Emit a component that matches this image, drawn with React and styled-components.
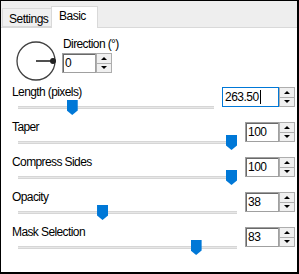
import React from "react";
import styled, { createGlobalStyle } from "styled-components";

const GlobalStyle = createGlobalStyle`
  html, body { margin: 0; padding: 0; background: #fff; }
  body { font-family: "Liberation Sans", Arial, sans-serif; font-size: 12px; color: #000; }
  * { box-sizing: border-box; }
`;

const Window = styled.div`
  width: 299px;
  height: 274px;
  border-style: solid;
  border-color: #000;
  border-width: 1px 2px 2px 1px;
  display: flex;
  flex-direction: column;
  background: #fff;
`;

const TabStrip = styled.div`
  flex: none;
  height: 27px;
  display: flex;
  align-items: flex-end;
  padding-left: 1px;
  background: #eeeeee;
  border-bottom: 1px solid #d9d9d9;
`;

const Tab = styled.div`
  height: ${(p) => (p.$active ? 22 : 19)}px;
  margin-bottom: ${(p) => (p.$active ? -1 : 0)}px;
  margin-left: ${(p) => (p.$active ? -1 : 0)}px;
  padding: ${(p) => (p.$active ? "2px 0 0 7px" : "3px 0 0 6px")};
  width: ${(p) => p.$w}px;
  background: ${(p) => (p.$active ? "#fff" : "#f0f0f0")};
  border: 1px solid #d9d9d9;
  border-bottom: ${(p) => (p.$active ? "none" : "1px solid #d9d9d9")};
  font-size: 12px;
  letter-spacing: -0.5px;
  line-height: 14px;
  position: relative;
`;

const Panel = styled.div`
  flex: 1;
  padding: 0 2px 0 10px;
  display: flex;
  flex-direction: column;
`;

const DialRow = styled.div`
  height: 58px;
  display: flex;
  align-items: flex-start;
  padding: 10px 0 0 5px;
`;

const Dial = styled.svg`
  margin-top: 3px;
  flex: none;
`;

const DirectionBox = styled.div`
  margin-left: 5px;
  display: flex;
  flex-direction: column;
  gap: 2px;
`;

const Label = styled.div`
  height: 13px;
  line-height: 13px;
  padding-left: 1px;
  letter-spacing: -0.6px;
  white-space: nowrap;
`;

const SliderRow = styled.div`
  height: 35px;
  display: grid;
  grid-template-columns: 1fr auto;
  column-gap: 8px;
`;

const SliderCell = styled.div`
  display: flex;
  flex-direction: column;
`;

const TrackArea = styled.div`
  position: relative;
  height: 22px;
  margin-left: 7px;
`;

const Track = styled.div`
  margin-top: 7px;
  height: 3px;
  background: #e7e7e7;
  border-top: 1px solid #d6d6d6;
  border-bottom: 1px solid #d6d6d6;
`;

const Thumb = styled.div`
  position: absolute;
  top: 1px;
  width: 11px;
  height: 15px;
  background: #0078d7;
  clip-path: polygon(0 0, 100% 0, 100% 70%, 50% 100%, 0 70%);
`;

const Spin = styled.div`
  display: flex;
  height: 20px;
  margin-top: ${(p) => p.$top || 0}px;
`;

const Field = styled.div`
  width: ${(p) => p.$w}px;
  height: 100%;
  padding: 2px 0 0 2px;
  line-height: 14px;
  border: 1px solid ${(p) => (p.$focus ? "#0078d7" : "#a0a0a0")};
  box-shadow: ${(p) => (p.$focus ? "none" : "inset 1px 1px 0 #696969")};
  background: #fff;
  letter-spacing: -0.5px;
  display: flex;
  align-items: flex-start;
`;

const Caret = styled.span`
  display: inline-block;
  width: 1px;
  height: 14px;
  background: #000;
  margin-left: 1px;
`;

const Buttons = styled.div`
  width: 16px;
  display: flex;
  flex-direction: column;
`;

const ArrowButton = styled.div`
  flex: 1;
  background: #f0f0f0;
  border: 1px solid #adadad;
  border-top: ${(p) => (p.$down ? "none" : "1px solid #adadad")};
  display: flex;
  align-items: center;
  justify-content: center;
  &::after {
    content: "";
    border-left: 3px solid transparent;
    border-right: 3px solid transparent;
    ${(p) => (p.$down ? "border-top: 3px solid #000;" : "border-bottom: 3px solid #000;")}
  }
`;

function UpDown({ value, width, focus, top }) {
  return (
    <Spin $top={top}>
      <Field $w={width} $focus={focus}>
        {value}
        {focus && <Caret />}
      </Field>
      <Buttons>
        <ArrowButton />
        <ArrowButton $down />
      </Buttons>
    </Spin>
  );
}

function Slider({ label, value, max, fieldWidth, focus }) {
  const ratio = value / max;
  return (
    <SliderRow>
      <SliderCell>
        <Label>{label}</Label>
        <TrackArea>
          <Track />
          <Thumb style={{ left: `calc(${ratio} * (100% - 11px))` }} />
        </TrackArea>
      </SliderCell>
      <UpDown value={value.toFixed(max > 100 ? 2 : 0)} width={fieldWidth} focus={focus} top={1} />
    </SliderRow>
  );
}

const sliders = [
  { label: "Length (pixels)", value: 263.5, max: 1000, fieldWidth: 57, focus: true },
  { label: "Taper", value: 100, max: 100, fieldWidth: 34 },
  { label: "Compress Sides", value: 100, max: 100, fieldWidth: 34 },
  { label: "Opacity", value: 38, max: 100, fieldWidth: 34 },
  { label: "Mask Selection", value: 83, max: 100, fieldWidth: 34 },
];

export default function App() {
  return (
    <>
      <GlobalStyle />
      <Window>
        <TabStrip>
          <Tab $w={50}>Settings</Tab>
          <Tab $w={47} $active>Basic</Tab>
        </TabStrip>
        <Panel>
          <DialRow>
            <Dial width="41" height="41" viewBox="0 0 41 41">
              <circle cx="20" cy="20" r="19" fill="none" stroke="#404040" strokeWidth="1.3" />
              <line x1="20" y1="20" x2="37" y2="20" stroke="#505050" strokeWidth="2" />
              <circle cx="37" cy="20" r="3" fill="#222" />
            </Dial>
            <DirectionBox>
              <Label>Direction (°)</Label>
              <UpDown value="0" width={34} />
            </DirectionBox>
          </DialRow>
          {sliders.map((s) => (
            <Slider key={s.label} {...s} />
          ))}
        </Panel>
      </Window>
    </>
  );
}
